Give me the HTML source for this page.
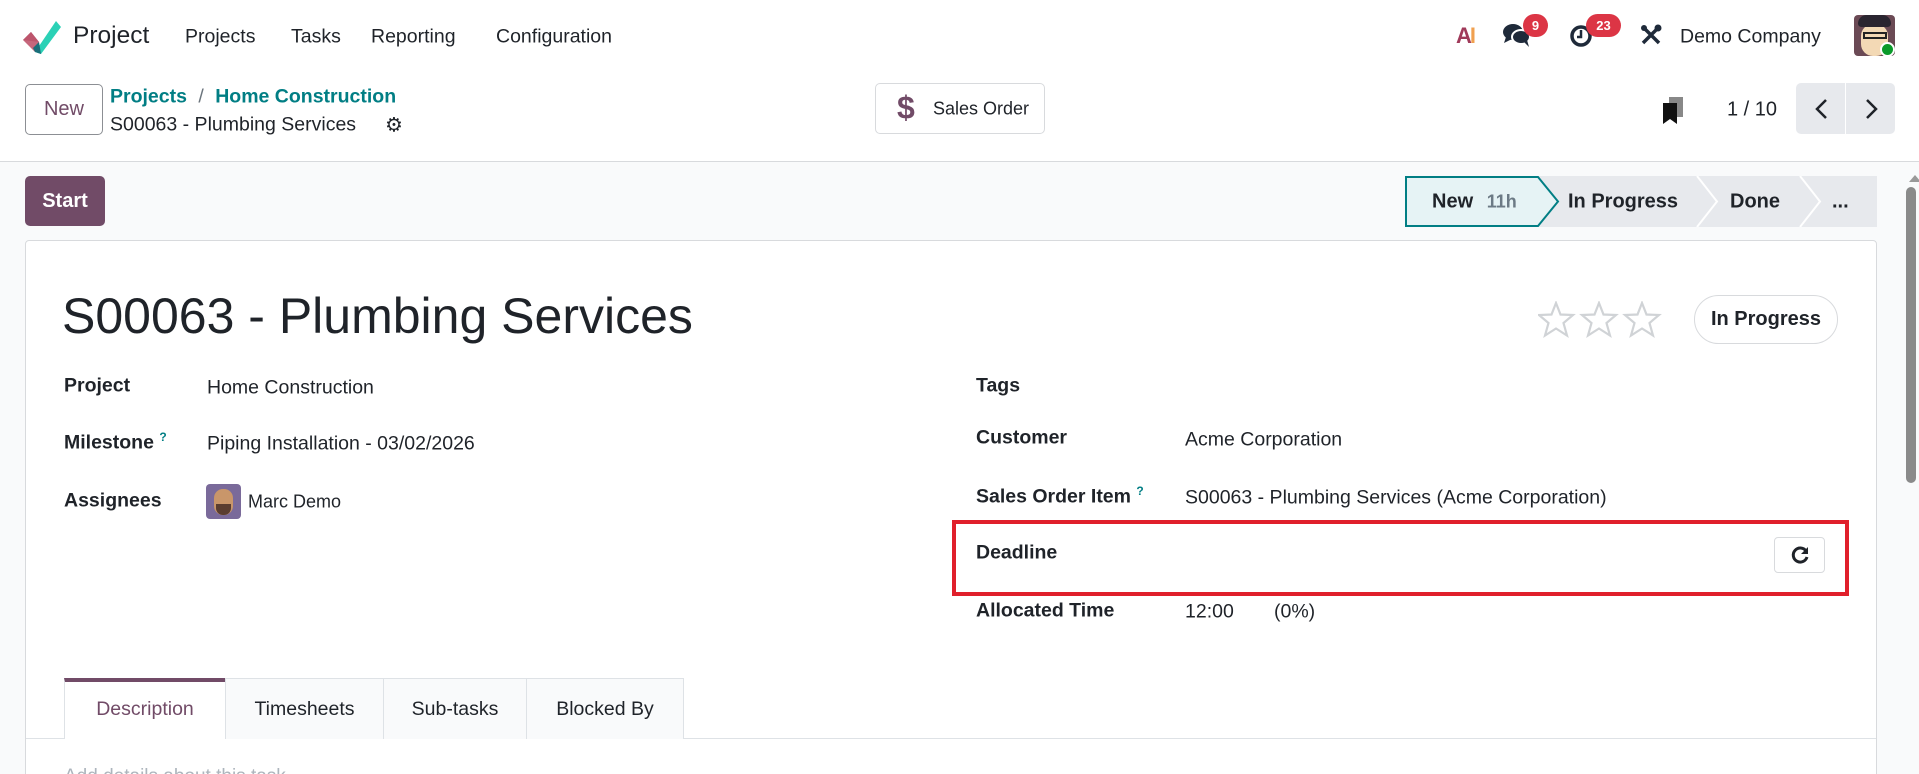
<!DOCTYPE html>
<html style="overflow:hidden;width:1919px;height:774px"><head><meta charset="utf-8">
<style>
*{box-sizing:border-box;margin:0;padding:0}
body{width:1919px;height:774px;overflow:hidden;font-family:"Liberation Sans",sans-serif;color:#1f2329;background:#f9fafb;position:relative}
.a{position:absolute;white-space:nowrap}
.nav{position:absolute;left:0;top:0;width:1919px;height:162px;background:#fff;border-bottom:1px solid #d8dadd}
.vc{transform:translateY(-50%)}
.badge{position:absolute;background:#dc3545;color:#fff;font-size:13px;font-weight:bold;border-radius:12px;height:23px;line-height:23px;text-align:center}
.lbl{font-weight:bold;font-size:19.5px}
.val{font-size:19.5px}
.tab{position:absolute;top:678px;height:61px;border:1px solid #dee2e6;border-bottom:none;background:#f9fafb;font-size:19.5px;line-height:61px;text-align:center}
</style></head><body>
<div class="nav">
  <svg class="a" style="left:21px;top:18px" width="40" height="36" viewBox="0 0 40 36">
    <path d="M2 22 L10 14 L18 24 Z" fill="#a2475e"/>
    <path d="M10 14 L18 24 L14 34 L2 22Z" fill="#c0576e" opacity=".9"/>
    <path d="M14 34 L35 3 L40 9 L20 36Z" fill="#2bd1b6"/>
    <path d="M12 30 L18 24 L20 36 L14 34Z" fill="#1a6f7a"/>
  </svg>
  <div class="a vc" style="left:73px;top:36px;font-size:24.5px">Project</div>
  <div class="a vc" style="left:185px;top:37px;font-size:19.5px">Projects</div>
  <div class="a vc" style="left:291px;top:37px;font-size:19.5px">Tasks</div>
  <div class="a vc" style="left:371px;top:37px;font-size:19.5px">Reporting</div>
  <div class="a vc" style="left:496px;top:37px;font-size:19.5px">Configuration</div>

  <div class="a" style="left:1456px;top:23px;font-size:22px;font-weight:bold;letter-spacing:-2px"><span style="color:#a03a5a">A</span><span style="color:#f0a050">I</span></div>
  <svg class="a" style="left:1502px;top:22px" width="30" height="26" viewBox="0 0 30 26"><ellipse cx="11" cy="10" rx="10" ry="8" fill="#1f2a3a"/><path d="M4 15 L2 21 L10 17Z" fill="#1f2a3a"/><ellipse cx="19" cy="15" rx="9" ry="7" fill="#1f2a3a" stroke="#fff" stroke-width="2"/><path d="M22 20 L27 25 L25 18Z" fill="#1f2a3a"/></svg>
  <div class="badge" style="left:1523px;top:14px;width:25px">9</div>
  <svg class="a" style="left:1569px;top:24px" width="24" height="24" viewBox="0 0 24 24"><circle cx="12" cy="12" r="9" fill="none" stroke="#1f2a3a" stroke-width="3.5"/><path d="M12 6 V13 H8" fill="none" stroke="#1f2a3a" stroke-width="2.5"/></svg>
  <div class="badge" style="left:1586px;top:14px;width:35px">23</div>
  <svg class="a" style="left:1640px;top:24px" width="22" height="22" viewBox="0 0 22 22"><path d="M3 3 L19 19 M19 3 L3 19" stroke="#1f2a3a" stroke-width="3.5"/><circle cx="4" cy="4" r="3" fill="#1f2a3a"/><circle cx="18" cy="4" r="3.5" fill="#1f2a3a"/></svg>
  <div class="a vc" style="left:1680px;top:37px;font-size:19.5px">Demo Company</div>
  <div class="a" style="left:1854px;top:15px;width:41px;height:41px;border-radius:4px;background:#6b4a55;overflow:hidden"><div style="position:absolute;left:7px;top:9px;width:27px;height:32px;border-radius:12px;background:#f3d9b5"></div><div style="position:absolute;left:4px;top:0;width:33px;height:12px;background:#2a2530;border-radius:10px 10px 4px 4px"></div><div style="position:absolute;left:9px;top:17px;width:24px;height:7px;border:2px solid #222"></div></div>
  <div class="a" style="left:1880px;top:42px;width:15px;height:15px;border-radius:50%;background:#0a9a2a;border:2px solid #fff"></div>

  <div class="a" style="left:25px;top:84px;width:78px;height:51px;border:1px solid #8c8f94;border-radius:5px;color:#714b67;font-size:20px;line-height:49px;text-align:center">New</div>
  <div class="a vc" style="left:110px;top:97px;font-size:19.5px;color:#017e84;font-weight:bold">Projects <span style="color:#6c757d;font-weight:normal;margin:0 6px">/</span> Home Construction</div>
  <div class="a vc" style="left:110px;top:125px;font-size:19.5px">S00063 - Plumbing Services</div>
  <div class="a vc" style="left:385px;top:125px;font-size:20px">⚙</div>

  <div class="a" style="left:875px;top:83px;width:170px;height:51px;border:1px solid #d8dadd;border-radius:5px;background:#fff"></div>
  <div class="a vc" style="left:897px;top:108px;font-size:32px;color:#714b67;font-weight:bold">$</div>
  <div class="a vc" style="left:933px;top:109px;font-size:18px">Sales Order</div>

  <svg class="a" style="left:1662px;top:97px" width="22" height="28" viewBox="0 0 22 28"><rect x="7" y="0" width="14" height="20" fill="#888"/><path d="M1 6 H15 V27 L8 22 L1 27Z" fill="#111"/></svg>
  <div class="a vc" style="left:1727px;top:110px;font-size:20px">1 / 10</div>
  <div class="a" style="left:1796px;top:83px;width:99px;height:51px;background:#e7e9ed;border-radius:5px"></div>
  <div class="a" style="left:1845px;top:83px;width:1px;height:51px;background:#fff"></div>
  <svg class="a" style="left:1812px;top:98px" width="20" height="22" viewBox="0 0 20 22"><path d="M14 2 L5 11 L14 20" fill="none" stroke="#1f2329" stroke-width="2.5"/></svg>
  <svg class="a" style="left:1861px;top:98px" width="20" height="22" viewBox="0 0 20 22"><path d="M6 2 L15 11 L6 20" fill="none" stroke="#1f2329" stroke-width="2.5"/></svg>
</div>

<div class="a" style="left:25px;top:176px;width:80px;height:50px;background:#714b67;border-radius:5px;color:#fff;font-weight:bold;font-size:20px;line-height:50px;text-align:center">Start</div>

<svg class="a" style="left:1405px;top:176px" width="472" height="51" viewBox="0 0 472 51">
  <rect x="0" y="0" width="472" height="51" fill="#e7e9ed"/>
  <path d="M1 1 H133 L153 25.5 L133 50 H1Z" fill="#e6f3f5" stroke="#017e84" stroke-width="2"/>
  <path d="M292 0 L312 25.5 L292 51" fill="none" stroke="#fff" stroke-width="2"/>
  <path d="M395 0 L415 25.5 L395 51" fill="none" stroke="#fff" stroke-width="2"/>
</svg>
<div class="a vc" style="left:1432px;top:202px;font-size:20px;font-weight:bold">New <span style="color:#6c7a85;font-size:18px;margin-left:8px">11h</span></div>
<div class="a vc" style="left:1568px;top:202px;font-size:20px;font-weight:bold">In Progress</div>
<div class="a vc" style="left:1730px;top:202px;font-size:20px;font-weight:bold">Done</div>
<div class="a vc" style="left:1832px;top:202px;font-size:20px;font-weight:bold">...</div>

<div class="a" style="left:1903px;top:170px;width:16px;height:604px;background:#f9fafb"></div>
<div class="a" style="left:1909px;top:175px;width:0;height:0;border-left:6px solid transparent;border-right:6px solid transparent;border-bottom:7px solid #999"></div>
<div class="a" style="left:1906px;top:187px;width:10px;height:296px;background:#8a8a8a;border-radius:5px"></div>

<div class="a" style="left:25px;top:240px;width:1852px;height:540px;background:#fff;border:1px solid #d8dadd;border-radius:4px"></div>

<div class="a vc" style="left:62px;top:316px;font-size:50px">S00063 - Plumbing Services</div>
<svg class="a" style="left:1538px;top:301px" width="126" height="38" viewBox="0 0 126 38">
  <g fill="none" stroke="#d0d3d6" stroke-width="2.2">
    <path d="M18 2 L22.5 13.5 L35 14 L25.5 22 L29 34.5 L18 27.5 L7 34.5 L10.5 22 L1 14 L13.5 13.5Z"/>
    <path d="M61 2 L65.5 13.5 L78 14 L68.5 22 L72 34.5 L61 27.5 L50 34.5 L53.5 22 L44 14 L56.5 13.5Z"/>
    <path d="M104 2 L108.5 13.5 L121 14 L111.5 22 L115 34.5 L104 27.5 L93 34.5 L96.5 22 L87 14 L99.5 13.5Z"/>
  </g>
</svg>
<div class="a" style="left:1694px;top:295px;width:144px;height:49px;border:1px solid #d8dadd;border-radius:25px;font-size:20px;font-weight:bold;line-height:47px;text-align:center">In Progress</div>

<div class="a vc lbl" style="left:64px;top:386px">Project</div>
<div class="a vc val" style="left:207px;top:388px">Home Construction</div>
<div class="a vc lbl" style="left:64px;top:442px">Milestone <sup style="color:#017e84;font-size:12px">?</sup></div>
<div class="a vc val" style="left:207px;top:444px">Piping Installation - 03/02/2026</div>
<div class="a vc lbl" style="left:64px;top:501px">Assignees</div>
<div class="a" style="left:206px;top:484px;width:35px;height:35px;border-radius:4px;background:#7a6a9a;overflow:hidden"><div style="position:absolute;left:8px;top:5px;width:19px;height:26px;border-radius:9px;background:#c9966a"></div><div style="position:absolute;left:10px;top:20px;width:15px;height:11px;border-radius:0 0 7px 7px;background:#5a3d30"></div></div>
<div class="a vc" style="left:248px;top:502px;font-size:18px">Marc Demo</div>

<div class="a vc lbl" style="left:976px;top:386px">Tags</div>
<div class="a vc lbl" style="left:976px;top:438px">Customer</div>
<div class="a vc val" style="left:1185px;top:440px">Acme Corporation</div>
<div class="a vc lbl" style="left:976px;top:496px">Sales Order Item <sup style="color:#017e84;font-size:12px">?</sup></div>
<div class="a vc val" style="left:1185px;top:498px">S00063 - Plumbing Services (Acme Corporation)</div>
<div class="a vc lbl" style="left:976px;top:553px">Deadline</div>
<div class="a" style="left:952px;top:520px;width:897px;height:76px;border:4px solid #e0202b"></div>
<div class="a" style="left:1774px;top:537px;width:51px;height:36px;border:1px solid #d8dadd;border-radius:4px;background:#fff"></div>
<svg class="a" style="left:1790px;top:545px" width="20" height="20" viewBox="0 0 20 20"><path d="M16 6 A7 7 0 1 0 17 12" fill="none" stroke="#1f2329" stroke-width="3"/><path d="M18 2 V9 H11Z" fill="#1f2329"/></svg>
<div class="a vc lbl" style="left:976px;top:611px">Allocated Time</div>
<div class="a vc val" style="left:1185px;top:612px">12:00</div>
<div class="a vc val" style="left:1274px;top:612px">(0%)</div>

<div class="a" style="left:26px;top:738px;width:1850px;height:1px;background:#dee2e6"></div>
<div class="tab" style="left:64px;width:162px;background:#fff;border-top:4px solid #714b67;color:#714b67;line-height:55px;height:61px">Description</div>
<div class="tab" style="left:225px;width:159px">Timesheets</div>
<div class="tab" style="left:383px;width:144px">Sub-tasks</div>
<div class="tab" style="left:526px;width:158px">Blocked By</div>
<div class="a" style="left:64px;top:766px;font-size:19px;color:#adb5bd">Add details about this task...</div>
</body></html>
